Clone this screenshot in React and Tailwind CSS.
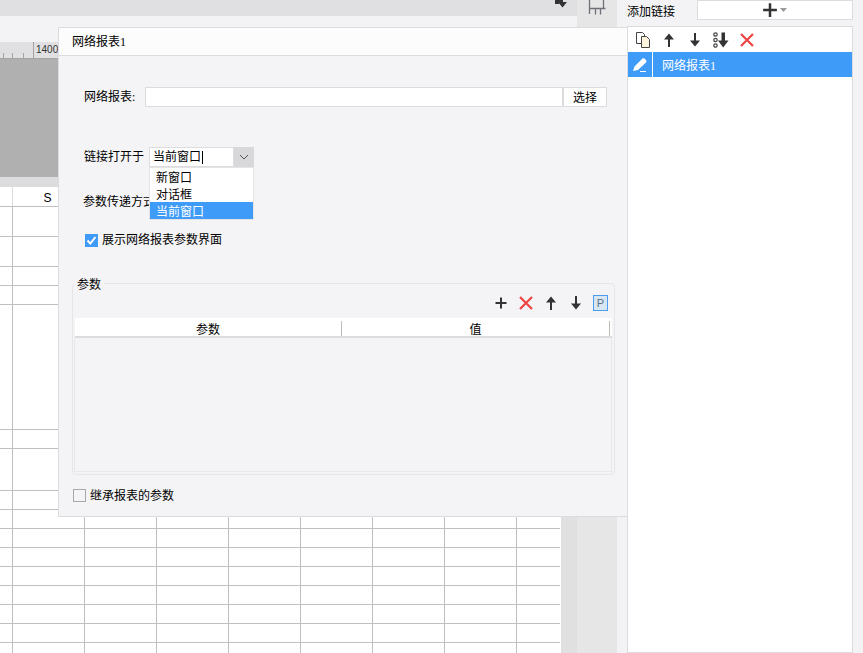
import React from "react";

const LINE = "border-[#bfbfbf]";
const rowHeights = [30, 30, 19, 19, 125, 19, 42, 19, 19, 19, 19, 19, 19, 19, 19, 19];
const colWidths = [72, 72, 72, 72, 72, 72, 72];

const ArrowUp = () => (
  <svg width="16" height="16" viewBox="0 0 16 16">
    <path d="M8 1.5 13 7.5H3Z M7 7h2v8H7Z" fill="#333" />
  </svg>
);

const ArrowDown = () => (
  <svg width="16" height="16" viewBox="0 0 16 16">
    <path d="M7 1h2v8H7Z M3 8.5h10L8 14.5Z" fill="#333" />
  </svg>
);

const RedX = () => (
  <svg width="16" height="16" viewBox="0 0 16 16">
    <path d="M2 2 14 14 M14 2 2 14" stroke="#ee4444" strokeWidth="2.2" fill="none" />
  </svg>
);

const Plus = ({ size = 16 }) => (
  <svg width={size} height={size} viewBox="0 0 16 16">
    <path d="M2.5 8h11 M8 2.5v11" stroke="#333" strokeWidth="2" fill="none" />
  </svg>
);

const CopyIcon = () => (
  <svg width="16" height="16" viewBox="0 0 16 16">
    <path d="M1.5 .5h6l2 2v9h-8Z" fill="#fff" stroke="#444" />
    <path d="M6.5 4.5h5l3 3v8h-8Z" fill="#fbf3dc" stroke="#444" />
  </svg>
);

const MoveBottom = () => (
  <svg width="16" height="16" viewBox="0 0 16 16">
    <circle cx="2.5" cy="2.5" r="1.7" fill="none" stroke="#444" strokeWidth="1.2" />
    <circle cx="2.5" cy="8" r="1.7" fill="none" stroke="#444" strokeWidth="1.2" />
    <circle cx="2.5" cy="13.5" r="1.7" fill="none" stroke="#444" strokeWidth="1.2" />
    <path d="M8.5 .5h3.5v8.5H8.5Z M5 8.5h10.5L10.2 15.5Z" fill="#333" />
  </svg>
);

const Pencil = () => (
  <svg width="16" height="16" viewBox="0 0 16 16">
    <path d="M1 14 2.5 9.5 10.5 1.5Q11.8.8 13 2L14 3Q15 4.5 14 5.5L6 13Z" fill="#fff" />
    <path d="M8 14.5h6" stroke="#fff" strokeWidth="1" />
  </svg>
);

const Sheet = () => (
  <div className="w-[561px] flex-1 overflow-hidden bg-white">
    <div className={`flex h-[20px] w-[560px] border-b ${LINE}`}>
      <div className="w-[13px] border-r border-[#dddddd]" />
      <div className="flex w-[72px] items-center justify-center pr-[3px] pt-[2px] font-['Liberation_Sans',sans-serif] text-xs text-black">
        S
      </div>
    </div>
    {rowHeights.map((h, i) => (
      <div key={i} className={`flex w-[560px] border-b ${LINE}`} style={{ height: h }}>
        <div className={`w-[13px] border-r ${LINE}`} />
        {colWidths.map((w, j) => (
          <div key={j} className={`border-r ${LINE}`} style={{ width: w }} />
        ))}
      </div>
    ))}
  </div>
);

const Ruler = () => (
  <div className="relative h-[17px] shrink-0 bg-[#e0e0e2]">
    <svg width="577" height="17" viewBox="0 0 577 17" className="block">
      <path d="M3.5 11v5 M12.5 11v5 M23.5 11v5 M33.5 0v16 M0 16.5h577" stroke="#a4a4a4" fill="none" />
    </svg>
    <span className="absolute left-[36px] top-[1px] font-['Liberation_Sans',sans-serif] text-[10px] leading-[13px] text-[#333]">
      1400
    </span>
  </div>
);

const Dialog = () => (
  <div className="absolute left-[58px] top-[27px] flex h-[490px] w-[570px] flex-col border border-[#dcdcde] bg-[#f4f4f6]">
    <div className="flex h-[28px] shrink-0 items-center border-b border-[#dcdcde] bg-[#fcfcfc] pl-[13px] text-xs text-black">
      网络报表1
    </div>

    <div className="mt-[31px] flex h-[20px] items-center pl-[25px] text-xs text-black">
      <span className="w-[61px]">网络报表:</span>
      <div className="h-[20px] w-[418px] border border-[#dcdcde] bg-white" />
      <div className="flex h-[20px] w-[44px] items-center justify-center border border-[#dcdcde] bg-white pt-px">
        选择
      </div>
    </div>

    <div className="mt-[40px] flex h-[20px] items-center pl-[25px] text-xs text-black">
      <span className="w-[65px]">链接打开于</span>
      <div className="relative flex h-[20px] w-[105px]">
        <div className="flex flex-1 items-center border border-[#dcdcde] bg-white pl-[3px]">
          当前窗口<span className="ml-px h-[13px] w-px bg-black" />
        </div>
        <div className="flex w-[20px] items-center justify-center bg-[#d8d8da]">
          <svg width="10" height="6" viewBox="0 0 10 6">
            <path d="M1 1 5 5 9 1" stroke="#555" strokeWidth="1" fill="none" />
          </svg>
        </div>
        <div className="absolute left-0 top-[20px] z-10 w-[105px] border border-[#e4e4e6] bg-white">
          <div className="flex h-[17px] items-center pl-[6px] pt-[2px]">新窗口</div>
          <div className="flex h-[17px] items-center pl-[6px] pt-[2px]">对话框</div>
          <div className="flex h-[17px] items-center bg-[#3f9bf8] pl-[6px] pt-[2px] text-white">当前窗口</div>
        </div>
      </div>
    </div>

    <div className="mt-[25px] flex h-[20px] items-center pl-[24px] text-xs text-black">参数传递方式</div>

    <div className="ml-[26px] mt-[21px] flex h-[14px] items-center text-xs text-black">
      <div className="flex h-[13px] w-[13px] items-center justify-center bg-[#3f9bf8]">
        <svg width="11" height="11" viewBox="0 0 11 11">
          <path d="M1.5 5.5 4.3 8.5 9.5 2" stroke="#fff" strokeWidth="2" fill="none" />
        </svg>
      </div>
      <span className="ml-[4px]">展示网络报表参数界面</span>
    </div>

    <div className="relative ml-[13px] mt-[36px] h-[192px] w-[543px] shrink-0 rounded border border-[#e6e6e8]">
      <span className="absolute -top-[7px] left-[1px] bg-[#f4f4f6] px-[3px] text-xs text-black">参数</span>
      <div className="flex items-center justify-end gap-[9px] pr-[6px] pt-[11px]">
        <Plus />
        <RedX />
        <ArrowUp />
        <ArrowDown />
        <div className="flex h-[16px] w-[15px] items-center justify-center border border-[#4a9df0] bg-[#d8e6f2] font-['Liberation_Sans',sans-serif] text-[11px] text-[#5a7288]">
          P
        </div>
      </div>
      <div className="ml-[2px] mt-[7px] w-[537px]">
        <div className="flex h-[20px] items-end border-b-2 border-[#dcdcde] bg-white text-xs text-black">
          <span className="h-[15px] w-[266px] text-center leading-[18px]">参数</span>
          <span className="h-[15px] w-px bg-[#bdbdb8]" />
          <span className="h-[15px] w-[267px] text-center leading-[18px]">值</span>
          <span className="h-[15px] w-px bg-[#bdbdb8]" />
        </div>
        <div className="-ml-px h-[134px] border border-t-0 border-[#e8e8ea]" />
      </div>
    </div>

    <div className="ml-[14px] mt-[13px] flex h-[14px] items-center text-xs text-black">
      <div className="h-[13px] w-[13px] border border-[#a8a8a8] bg-[#f4f4f6]" />
      <span className="ml-[4px] pt-[2px]">继承报表的参数</span>
    </div>
  </div>
);

const SidePanel = () => (
  <div className="flex w-[236px] flex-col bg-[#f3f3f5]">
    <div className="flex h-[26px] shrink-0 items-start">
      <span className="flex h-[23px] w-[70px] items-center text-xs text-black">添加链接</span>
      <div className="flex h-[20px] w-[156px] items-center justify-center border border-[#dcdcde] bg-white pr-[3px]">
        <Plus size={20} />
        <svg width="7" height="4" viewBox="0 0 7 4">
          <path d="M0 0h7L3.5 4Z" fill="#999" />
        </svg>
      </div>
    </div>
    <div className="w-[226px] flex-1 border border-[#dcdcde] bg-white">
      <div className="flex h-[25px] items-center gap-[10px] pl-[7px]">
        <CopyIcon />
        <ArrowUp />
        <ArrowDown />
        <MoveBottom />
        <RedX />
      </div>
      <div className="flex h-[25px] items-center bg-[#3f9bf8] text-xs text-white">
        <div className="flex h-full w-[24px] items-center justify-center">
          <Pencil />
        </div>
        <span className="h-full w-px bg-white" />
        <span className="ml-[9px] pt-[2px]">网络报表1</span>
      </div>
    </div>
  </div>
);

export default function App() {
  return (
    <div className="relative flex h-[653px] w-[863px] overflow-hidden bg-[#f3f3f5] font-['Liberation_Serif','Noto_Sans_CJK_SC',serif]">
      <div className="flex w-[577px] flex-col">
        <div className="relative h-[16px] shrink-0 bg-[#e0e0e2]">
          <svg width="12" height="8" viewBox="0 0 12 8" className="absolute left-[555px] top-0">
            <path d="M0 0h4v4H0Z M4 0h4v2h4L7.5 7.5 3 2h1Z" fill="#333" />
          </svg>
        </div>
        <div className="h-[26px] shrink-0" />
        <Ruler />
        <div className="h-[118px] shrink-0 bg-[#b0b0b0]" />
        <div className="h-[10px] shrink-0 bg-[#dcdcde]" />
        <div className="flex min-h-0 flex-1">
          <Sheet />
          <div className="w-[16px] bg-[#e0e0e0]" />
        </div>
      </div>
      <div className="w-[40px] bg-[#e6e6e6]">
        <svg width="18" height="15" viewBox="0 0 18 15" className="ml-[11px] block">
          <path d="M1.5 0v14 M1.5 8.5h16 M7.5 8.5v6 M12.5 8.5v6 M15.5 0v8.5" stroke="#707078" strokeWidth="1.3" fill="none" />
        </svg>
      </div>
      <div className="w-[10px]" />
      <SidePanel />
      <Dialog />
    </div>
  );
}
